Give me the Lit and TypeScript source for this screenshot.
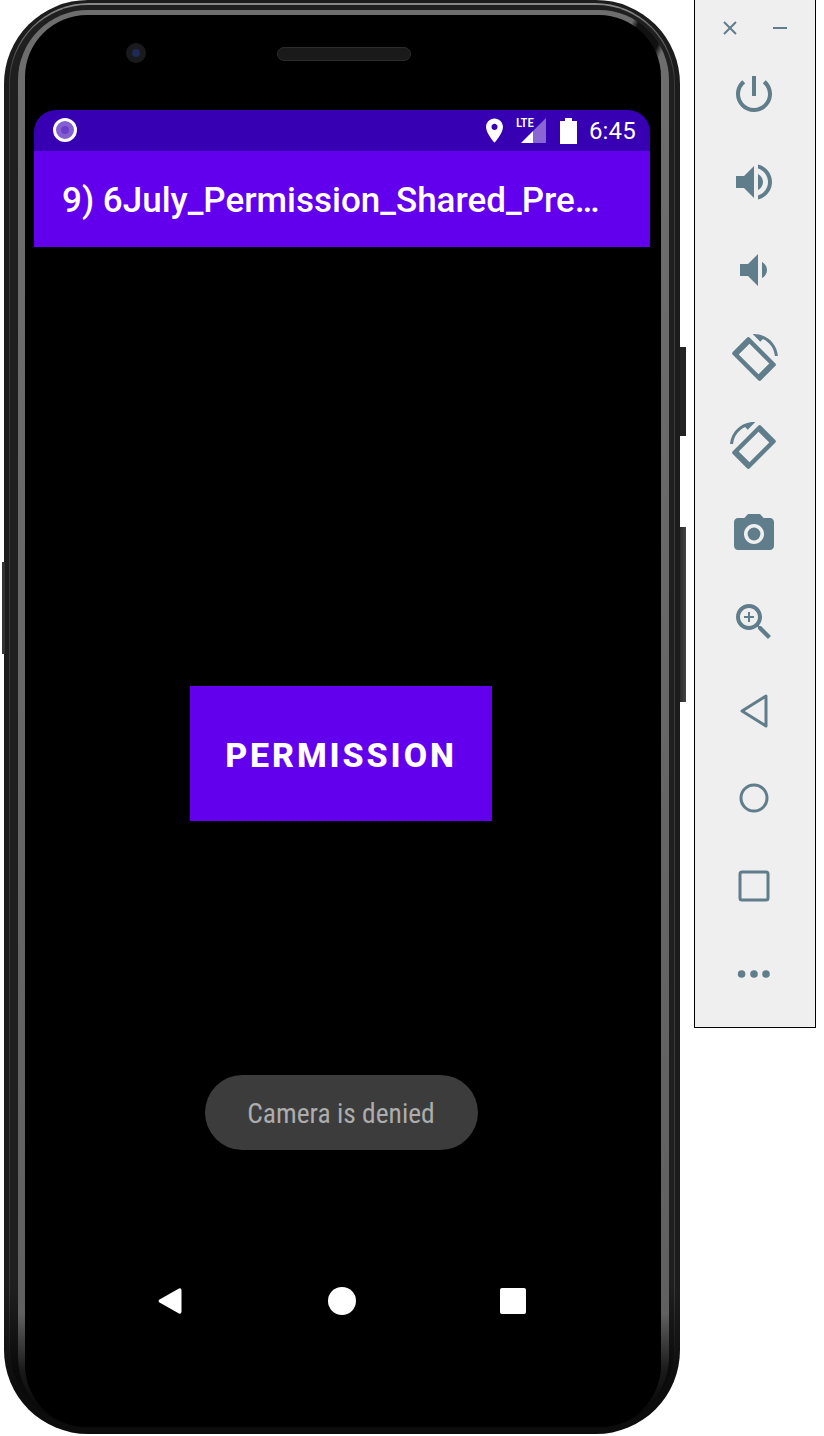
import { LitElement, html, css, svg } from 'lit';
import { customElement } from 'lit/decorators.js';

// phone frame with a rotated-phone glyph shared by the two rotate buttons
const rotatePhone = svg`
  <path d="M16.48 2.52c3.27 1.55 5.61 4.72 5.97 8.48h1.5C23.44 4.84 18.29 0 12 0l-.66.03 3.81 3.81 1.33-1.32z"/>
  <g transform="translate(0 .5) rotate(45 12 12)">
    <path fill-rule="evenodd" d="M3 6h18a1 1 0 0 1 1 1v10a1 1 0 0 1-1 1H3a1 1 0 0 1-1-1V7a1 1 0 0 1 1-1zM5 8.200v7.600h14V8.200z"/>
  </g>`;

const toolIcons = [
  svg`<path d="M13 3h-2v10h2V3zm4.830 2.170l-1.420 1.420C17.990 7.860 19 9.810 19 12c0 3.870-3.130 7-7 7s-7-3.130-7-7c0-2.190 1.010-4.140 2.580-5.420L6.170 5.170C4.230 6.820 3 9.260 3 12c0 4.970 4.030 9 9 9s9-4.030 9-9c0-2.740-1.230-5.180-3.170-6.830z"/>`,
  svg`<path d="M3 9v6h4l5 5V4L7 9H3zm13.500 3c0-1.770-1.020-3.290-2.500-4.030v8.050c1.480-.73 2.500-2.250 2.500-4.020zM14 3.230v2.060c2.890.86 5 3.540 5 6.710s-2.110 5.850-5 6.710v2.060c4.010-.91 7-4.490 7-8.770s-2.990-7.860-7-8.770z"/>`,
  svg`<path d="M18.500 12c0-1.770-1.020-3.290-2.500-4.030v8.050c1.480-.73 2.500-2.250 2.500-4.020zM5 9v6h4l5 5V4L9 9H5z"/>`,
  rotatePhone,
  svg`<g transform="matrix(-1 0 0 1 24 0)">${rotatePhone}</g>`,
  svg`<path d="M9 2L7.170 4H4c-1.100 0-2 .9-2 2v12c0 1.100.9 2 2 2h16c1.100 0 2-.9 2-2V6c0-1.100-.9-2-2-2h-3.170L15 2H9zm3 15c-2.760 0-5-2.240-5-5s2.240-5 5-5 5 2.240 5 5-2.240 5-5 5z"/><circle cx="12" cy="12" r="3.200"/>`,
  svg`<path d="M15.500 14h-.79l-.28-.27C15.410 12.590 16 11.110 16 9.500 16 5.910 13.090 3 9.500 3S3 5.910 3 9.500 5.910 16 9.500 16c1.610 0 3.090-.59 4.230-1.570l.27.28v.79l5 4.990L20.490 19l-4.990-5zm-6 0C7.010 14 5 11.990 5 9.500S7.010 5 9.500 5 14 7.010 14 9.500 11.990 14 9.500 14zM12 10h-2v2H9v-2H7V9h2V7h1v2h2v1z"/>`,
  svg`<path class="line" d="M6 12.500L18 5v15z"/>`,
  svg`<circle class="line" cx="12" cy="12" r="6.500"/>`,
  svg`<rect class="line" x="5" y="5" width="14" height="14" rx="1"/>`,
  svg`<circle cx="5.800" cy="12" r="1.900"/><circle cx="12" cy="12" r="1.900"/><circle cx="18" cy="12" r="1.900"/>`,
];

@customElement('app-root')
export class AppRoot extends LitElement {
  static styles = css`
    :host {
      display: block;
      width: 824px;
      height: 1436px;
      background: #fff;
      overflow: hidden;
      font-family: Roboto, "Liberation Sans", sans-serif;
    }

    .page {
      display: flex;
      align-items: flex-start;
      padding-left: 4px;
    }

    /* phone body, ring by ring from the outside in */
    .phone {
      position: relative;
      box-sizing: border-box;
      width: 676px;
      height: 1434px;
      flex: none;
      display: flex;
      padding: 3px 5px 6px 5px;
      background: linear-gradient(#1c1c1c 90%, #0c0c0c 97%);
      border-radius: 84px;
    }

    .rim {
      flex: 1;
      display: flex;
      padding: 2px 1px 1px 1px;
      background: linear-gradient(#8a8a8a 0, #3a3a3a 5%, #3a3a3a 90%, #0c0c0c 96%);
      border-radius: 80px;
    }

    .rim-inner {
      flex: 1;
      display: flex;
      padding: 5px 5px 0 8px;
      background: linear-gradient(#1f1f1f 90%, #0a0a0a 96%);
      border-radius: 78px;
    }

    .bezel {
      flex: 1;
      display: flex;
      padding: 5px 8px 0 7px;
      background:
        conic-gradient(transparent 22.500deg, #111 23deg, #111 25deg, transparent 25.500deg),
        linear-gradient(#6e6e6e 0, #606060 92%, #1a1a1a 96%, #000 100%);
      border-radius: 70px;
    }

    .face {
      flex: 1;
      display: flex;
      flex-direction: column;
      padding: 0 11px 0 9px;
      background: #000;
      border-radius: 62px;
    }

    .sensors {
      height: 95px;
      display: flex;
      align-items: flex-start;
      padding-left: 92px;
      box-sizing: border-box;
    }

    .camera {
      width: 20px;
      height: 20px;
      margin-top: 28px;
      border-radius: 50%;
      background: #1a1a1c;
      display: flex;
      align-items: center;
      justify-content: center;
    }

    .camera i {
      width: 8px;
      height: 8px;
      border-radius: 50%;
      background: #1c2a55;
    }

    .speaker {
      box-sizing: border-box;
      width: 134px;
      height: 14px;
      margin: 32px 0 0 131px;
      border-radius: 7px;
      background: #1a1a1a;
      border: 1px solid #2c2c2c;
    }

    .screen {
      display: flex;
      flex-direction: column;
      align-items: center;
      flex: 1;
    }

    .status {
      box-sizing: border-box;
      align-self: stretch;
      height: 41px;
      display: flex;
      align-items: center;
      padding: 0 14px 0 19px;
      background: #3700b3;
      border-radius: 22px 22px 0 0;
      color: #fff;
    }

    .dot {
      width: 24px;
      height: 24px;
      margin-top: -1px;
      box-sizing: border-box;
      border: 3px solid #fff;
      border-radius: 50%;
      background: #8560d2;
      display: flex;
      align-items: center;
      justify-content: center;
    }

    .dot i {
      width: 8px;
      height: 8px;
      border-radius: 50%;
      background: #6c3fc8;
    }

    .spacer {
      flex: 1;
    }

    .status svg {
      display: block;
      fill: #fff;
    }

    .signal {
      position: relative;
      width: 30px;
      height: 26px;
      margin-left: 7px;
    }

    .lte {
      position: absolute;
      left: 0;
      top: -2px;
      font-size: 13px;
      font-weight: 500;
      line-height: 14px;
      font-stretch: 75%;
    }

    .battery {
      margin-left: 14px;
    }

    .time {
      margin-left: 12px;
      font-size: 24px;
      line-height: 28px;
      letter-spacing: 0.2px;
    }

    .appbar {
      box-sizing: border-box;
      align-self: stretch;
      height: 96px;
      padding: 2px 28px 0;
      display: flex;
      align-items: center;
      background: #6200ee;
      color: #fff;
      font-size: 35px;
      font-weight: 500;
      white-space: nowrap;
    }

    .action {
      box-sizing: border-box;
      width: 302px;
      height: 135px;
      margin: 439px 2px 0 0;
      padding-top: 2px;
      display: flex;
      align-items: center;
      justify-content: center;
      background: #6200ee;
      color: #fff;
      font-size: 34px;
      font-weight: 800;
      letter-spacing: 2.900px;
    }

    .toast {
      box-sizing: border-box;
      width: 273px;
      height: 75px;
      margin: 254px 2px 0 0;
      padding-top: 2px;
      display: flex;
      align-items: center;
      justify-content: center;
      background: #3c3c3c;
      border-radius: 38px;
      color: #adadad;
      font-size: 27.500px;
      font-stretch: 75%;
      white-space: nowrap;
    }

    .nav {
      align-self: stretch;
      display: flex;
      align-items: center;
      margin-top: 127px;
      padding-left: 113px;
      height: 48px;
    }

    .nav svg {
      display: block;
      fill: #fff;
      flex: none;
    }

    .nav svg + svg {
      margin-left: 123px;
    }

    /* hardware keys stick out of the body */
    .key {
      position: absolute;
      width: 6px;
      background: linear-gradient(90deg, #2c2c2c, #444);
    }

    .key.power {
      left: 676px;
      top: 347px;
      height: 89px;
      background: #232323;
    }

    .key.volume {
      left: 676px;
      top: 527px;
      height: 175px;
    }

    .key.left {
      left: -2px;
      top: 562px;
      width: 3px;
      height: 92px;
      background: #333;
    }

    .panel {
      box-sizing: border-box;
      width: 122px;
      height: 1028px;
      margin-left: 14px;
      flex: none;
      background: #efefef;
      border: 1px solid #000;
      border-top: none;
      display: flex;
      flex-direction: column;
      align-items: center;
    }

    .window {
      align-self: stretch;
      height: 70px;
      display: flex;
      align-items: flex-start;
      padding: 20px 0 0 27px;
      box-sizing: border-box;
    }

    .window svg {
      display: block;
      stroke: #607d8b;
      stroke-width: 2;
      fill: none;
    }

    .window svg + svg {
      margin-left: 34px;
    }

    .tools {
      display: flex;
      flex-direction: column;
      gap: 40px;
      margin-right: 2px;
    }

    .tools svg {
      display: block;
      width: 48px;
      height: 48px;
      fill: #607d8b;
    }

    .tools .line {
      fill: none;
      stroke: #607d8b;
      stroke-width: 1.500;
      stroke-linejoin: round;
    }
  `;

  render() {
    return html`
      <div class="page">
        <div class="phone">
          <div class="key power"></div>
          <div class="key volume"></div>
          <div class="key left"></div>
          <div class="rim">
            <div class="rim-inner">
              <div class="bezel">
                <div class="face">
                  <div class="sensors">
                    <div class="camera"><i></i></div>
                    <div class="speaker"></div>
                  </div>
                  <div class="screen">
                    ${this.renderStatus()}
                    <div class="appbar">9) 6July_Permission_Shared_Pre…</div>
                    <div class="action">PERMISSION</div>
                    <div class="toast">Camera is denied</div>
                    <div class="nav">
                      <svg width="48" height="48" viewBox="0 0 48 48">
                        <path d="M12.500 22.500L32 11.500q2-1 2.500 1.500v22q-.5 2.500-2.500 1.500L12.500 25.500q-2-1.500 0-3z" />
                      </svg>
                      <svg width="48" height="48" viewBox="0 0 48 48"><circle cx="24" cy="24" r="14" /></svg>
                      <svg width="48" height="48" viewBox="0 0 48 48">
                        <rect x="11" y="11" width="26" height="26" rx="2" />
                      </svg>
                    </div>
                  </div>
                </div>
              </div>
            </div>
          </div>
        </div>
        <div class="panel">
          <div class="window">
            <svg width="16" height="16" viewBox="0 0 16 16"><path d="M2 2l12 12M14 2L2 14" /></svg>
            <svg width="16" height="16" viewBox="0 0 16 16"><path d="M1 8h14" /></svg>
          </div>
          <div class="tools">
            ${toolIcons.map((icon) => html`<svg viewBox="0 0 24 24">${icon}</svg>`)}
          </div>
        </div>
      </div>
    `;
  }

  renderStatus() {
    return html`
      <div class="status">
        <div class="dot"><i></i></div>
        <div class="spacer"></div>
        <svg width="29" height="29" viewBox="0 0 24 24">
          <path
            d="M12 2C8.130 2 5 5.130 5 9c0 5.250 7 13 7 13s7-7.750 7-13c0-3.870-3.130-7-7-7zm0 9.500c-1.380 0-2.500-1.120-2.500-2.500s1.120-2.500 2.500-2.500 2.500 1.120 2.500 2.500-1.120 2.500-2.500 2.500z"
          />
        </svg>
        <div class="signal">
          <span class="lte">LTE</span>
          <svg width="30" height="26" viewBox="0 0 30 26">
            <path d="M17 13L30 0v25H17z" style="fill:#8a66d4" />
            <path d="M5 25l12-12v12z" />
          </svg>
        </div>
        <svg class="battery" width="17" height="26" viewBox="0 0 17 26">
          <path d="M5 0h7v3h5v23H0V3h5z" />
        </svg>
        <span class="time">6:45</span>
      </div>
    `;
  }
}
